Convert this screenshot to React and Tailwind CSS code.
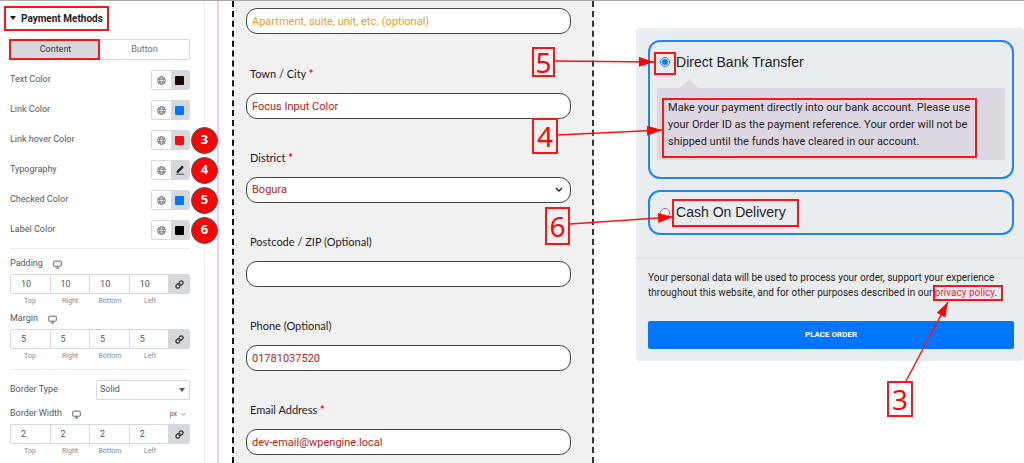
import React, { useState } from "react";

const colorControls = [
  { name: "Text Color", color: "bg-[#1c0404]" },
  { name: "Link Color", color: "bg-[#0075ff]" },
  { name: "Link hover Color", color: "bg-[#f50a0a]", badge: 3 },
  { name: "Typography", badge: 4 },
  { name: "Checked Color", color: "bg-[#0075ff]", badge: 5 },
  { name: "Label Color", color: "bg-black", badge: 6 },
];

const sides = ["Top", "Right", "Bottom", "Left"];

const callouts = [
  { label: 5, box: "left-[532px] top-[47px] w-[23px] h-[30px]" },
  { label: 4, box: "left-[532px] top-[118px] w-[26px] h-[36px]" },
  { label: 6, box: "left-[545px] top-[207px] w-[25px] h-[38px]" },
  { label: 3, box: "left-[887px] top-[381px] w-[26px] h-[36px]" },
];

const arrows = [
  { x1: 555, y1: 61, x2: 654, y2: 62 },
  { x1: 557, y1: 135, x2: 662, y2: 130 },
  { x1: 570, y1: 224, x2: 673, y2: 217 },
  { x1: 906, y1: 381, x2: 948, y2: 302 },
];

const GlobeIcon = () => (
  <svg viewBox="0 0 12 12" className="h-[9px] w-[9px]" fill="none" stroke="#515962" strokeWidth="1">
    <circle cx="6" cy="6" r="5.2" />
    <ellipse cx="6" cy="6" rx="2.4" ry="5.2" />
    <path d="M1.2 4.2h9.6M1.2 7.8h9.6" />
  </svg>
);

const PencilIcon = () => (
  <svg viewBox="0 0 12 12" className="h-[10px] w-[10px]" fill="#1f2124">
    <path d="M2 9.2V7.2L7.9 1.3a.9.9 0 0 1 1.2 0l.9.9a.9.9 0 0 1 0 1.2L4.1 9.2z" />
    <path d="M1.5 10.4h9.3v1.1H1.5z" />
  </svg>
);

const MonitorIcon = () => (
  <svg viewBox="0 0 10 10" className="h-[9px] w-[9px]" fill="none" stroke="#515962" strokeWidth="1">
    <rect x="0.8" y="1.3" width="8.4" height="5.6" rx="0.6" />
    <path d="M5 7v1.6M3 9h4" />
  </svg>
);

const LinkIcon = () => (
  <svg viewBox="0 0 24 24" className="h-[9px] w-[9px]" fill="none" stroke="#33373c" strokeWidth="3.4" strokeLinecap="round">
    <path d="M10 13a5 5 0 0 0 7.5.5l3-3a5 5 0 0 0-7-7l-1.7 1.7" />
    <path d="M14 11a5 5 0 0 0-7.5-.5l-3 3a5 5 0 0 0 7 7l1.7-1.7" />
  </svg>
);

const Highlight = ({ className }) => (
  <span aria-hidden="true" className={`pointer-events-none absolute border-2 border-[#fa1414] ${className}`} />
);

const ColorControl = ({ name, color, badge }) => (
  <div className="relative flex h-5 items-center justify-between">
    <span>{name}</span>
    <div className="flex h-5 w-[39px] overflow-hidden rounded-[2px] border border-[#d5d8dc]">
      <button aria-label={`${name} global`} className="flex flex-1 items-center justify-center">
        <GlobeIcon />
      </button>
      <button aria-label={name} className="flex flex-1 items-center justify-center bg-[#d5d8dc]">
        {color ? <span className={`h-[9px] w-[9px] rounded-[1px] ${color}`} /> : <PencilIcon />}
      </button>
    </div>
    {badge && (
      <span className="absolute left-full z-10 ml-[1px] flex h-[27px] w-[27px] items-center justify-center rounded-full border border-[#555] bg-[#fa0505] font-['Noto_Sans',sans-serif] text-[13px] font-bold text-white">
        {badge}
      </span>
    )}
  </div>
);

const Dimensions = ({ name, value, unit }) => (
  <fieldset>
    <div className="flex h-4 items-center justify-between">
      <div className="flex items-center gap-[10px]">
        <span>{name}</span>
        <MonitorIcon />
      </div>
      {unit && (
        <button className="flex items-center gap-1 pr-1 text-[7px]">
          {unit}
          <svg viewBox="0 0 6 4" className="h-[3px] w-[5px]" fill="none" stroke="#515962">
            <path d="M.5.5 3 3 5.5.5" />
          </svg>
        </button>
      )}
    </div>
    <div className="mt-[2px] grid h-5 grid-cols-[2fr_2fr_2fr_2fr_1fr] overflow-hidden rounded-[2px] border border-[#d5d8dc]">
      {sides.map((side) => (
        <input
          key={side}
          aria-label={`${name} ${side}`}
          defaultValue={value}
          className="min-w-0 border-r border-[#d5d8dc] pt-px pl-[10px] text-[9px] outline-none"
        />
      ))}
      <button aria-label={`Link ${name} values`} className="flex items-center justify-center bg-[#d5d8dc]">
        <LinkIcon />
      </button>
    </div>
    <div className="mt-[2px] grid h-[10px] grid-cols-[2fr_2fr_2fr_2fr_1fr] text-center text-[7px] leading-[10px] text-[#818a96]">
      {sides.map((side) => (
        <span key={side}>{side}</span>
      ))}
    </div>
  </fieldset>
);

const Sidebar = () => {
  const [tab, setTab] = useState("Content");

  return (
    <aside className="w-[205px] shrink-0 border-r border-[#eceef0] pr-[14px] pl-[10px] text-[9px] text-[#515962]">
      <button className="relative mt-[8px] flex h-[18px] items-center gap-[5px] text-[10px] font-bold text-[#1f2124]">
        <span className="h-0 w-0 border-x-[3px] border-t-[4px] border-x-transparent border-t-[#1f2124]" />
        Payment Methods
        <Highlight className="-top-[3px] -right-[6px] -bottom-[4px] -left-[6px]" />
      </button>

      <div className="mt-[12px] flex h-[21px] rounded-[2px] border border-[#d5d8dc]">
        {["Content", "Button"].map((name) => (
          <button
            key={name}
            onClick={() => setTab(name)}
            className={`relative flex-1 pt-px ${tab === name ? "bg-[#d5d8dc] text-[#33373c]" : "text-[#69727d]"}`}
          >
            {name}
            {name === "Content" && <Highlight className="-top-px right-0 -bottom-px -left-[2px]" />}
          </button>
        ))}
      </div>

      <div className="mt-[10px] flex flex-col gap-[10px]">
        {colorControls.map((item) => (
          <ColorControl key={item.name} {...item} />
        ))}
      </div>

      <div className="mt-[8px] flex flex-col gap-[5px] border-t border-[#e6e8ea] pt-[7px]">
        <Dimensions name="Padding" value="10" />
        <Dimensions name="Margin" value="5" />
      </div>

      <div className="mt-[8px] border-t border-[#e6e8ea] pt-[10px]">
        <div className="mb-[6px] flex h-5 items-center justify-between">
          <label htmlFor="border-type">Border Type</label>
          <div className="relative w-[94px]">
            <select id="border-type" className="block h-5 w-full appearance-none rounded-[2px] border border-[#d5d8dc] bg-white pl-[3px]">
              <option>Solid</option>
            </select>
            <span className="pointer-events-none absolute top-2 right-[5px] border-x-[3px] border-t-[4px] border-x-transparent border-t-[#515962]" />
          </div>
        </div>
        <Dimensions name="Border Width" value="2" unit="px" />
      </div>
    </aside>
  );
};

const fieldStyle =
  "block h-[26px] w-full rounded-[11px] border border-[#444] bg-white px-[5px] font-[Roboto,sans-serif] text-[11px] text-[#b81c1c] outline-none placeholder:text-[#ee9a2b]";

const Field = ({ id, label, required, children, ...rest }) => (
  <div>
    <label htmlFor={id} className="mb-[9px] ml-1 block h-5 font-[Lato,sans-serif] text-[11px] leading-5 text-[#222]">
      {label} {required && <span className="font-bold text-[#f50a0a]">*</span>}
    </label>
    {children || <input id={id} className={fieldStyle} {...rest} />}
  </div>
);

const BillingForm = () => (
  <form className="border-x-2 border-dashed border-r-[#333] border-l-[#111] bg-[#f1f1f1] pr-[21px] pb-2 pl-[12px]">
    <input
      aria-label="Apartment, suite, unit, etc. (optional)"
      placeholder="Apartment, suite, unit, etc. (optional)"
      className={`mt-[7px] ${fieldStyle}`}
    />
    <div className="mt-[30px] flex flex-col gap-[29px]">
      <Field id="city" label="Town / City" required defaultValue="Focus Input Color" />
      <Field id="district" label="District" required>
        <div className="relative">
          <select id="district" className={`appearance-none ${fieldStyle}`}>
            <option>Bogura</option>
          </select>
          <svg viewBox="0 0 8 6" className="pointer-events-none absolute top-[10px] right-[8px] h-[6px] w-[8px]" fill="none" stroke="#222" strokeWidth="1.4">
            <path d="M1 1l3 3 3-3" />
          </svg>
        </div>
      </Field>
      <Field id="postcode" label="Postcode / ZIP (Optional)" />
      <Field id="phone" label="Phone (Optional)" defaultValue="01781037520" />
      <Field id="email" label="Email Address" required defaultValue="dev-email@wpengine.local" />
    </div>
  </form>
);

const OrderPayment = () => {
  const [method, setMethod] = useState("bank");

  return (
    <section className="mt-[27px] self-start rounded-[4px] bg-[#e9edf0] text-[#222]">
      <div className="flex flex-col gap-[11px] border-b-2 border-[#e1e5e9] pt-[12px] pr-[10px] pb-[22px] pl-[12px]">
        <div className="rounded-[12px] border-2 border-[#1c84ff] px-[7px] pt-[8px] pb-[17px]">
          <label className="flex h-6 items-center gap-[6px] pl-[3px] font-['Liberation_Sans',sans-serif] text-[14px]">
            <span className="relative flex">
              <input
                type="radio"
                name="payment"
                checked={method === "bank"}
                onChange={() => setMethod("bank")}
                className="m-0 h-[10px] w-[10px] accent-[#0075ff]"
              />
              <Highlight className="-top-[5px] -right-[6px] -bottom-[8px] -left-[6px]" />
            </span>
            Direct Bank Transfer
          </label>
          <div className="mt-[5px] ml-[23px] h-0 w-0 border-x-[9px] border-b-[9px] border-x-transparent border-b-[#ddd7e2]" />
          <p className="relative rounded-[1px] bg-[#ddd7e2] pt-[11px] pr-[28px] pb-[10px] pl-[11px] text-[11px] leading-[17px] text-[#2b1d22]">
            Make your payment directly into our bank account. Please use your Order ID as the payment reference. Your
            order will not be shipped until the funds have cleared in our account.
            <Highlight className="top-[10px] right-[28px] bottom-[2px] left-[5px]" />
          </p>
        </div>
        <div className="rounded-[12px] border-2 border-[#1c84ff] px-[7px] py-[7px]">
          <label className="flex h-[27px] items-center gap-[6px] pl-[3px] font-['Liberation_Sans',sans-serif] text-[14px]">
            <input
              type="radio"
              name="payment"
              checked={method === "cod"}
              onChange={() => setMethod("cod")}
              className="m-0 h-[10px] w-[10px] accent-[#0075ff]"
            />
            <span className="relative">
              Cash On Delivery
              <Highlight className="-top-[3px] -right-[13px] -bottom-[4px] -left-[4px]" />
            </span>
          </label>
        </div>
      </div>
      <div className="pt-[11px] pr-[10px] pb-[12px] pl-[12px]">
        <p className="text-[10px] leading-[15px] text-[#2b1d22]">
          Your personal data will be used to process your order, support your experience throughout this website, and
          for other purposes described in our{" "}
          <span className="relative whitespace-nowrap">
            <a href="#privacy" className="text-[#ee2b3a]">privacy policy</a>.
            <Highlight className="-top-[2px] -right-[6px] -bottom-[3px] -left-[2px]" />
          </span>
        </p>
        <button className="mt-[21px] block h-7 w-full rounded-[2px] bg-[#0075ff] text-[8px] font-bold text-white">
          PLACE ORDER
        </button>
      </div>
    </section>
  );
};

// numbered notes and the arrows that point at the controls they explain
const Annotations = () => (
  <div className="pointer-events-none absolute inset-x-0 -top-px bottom-0 overflow-hidden">
    <svg className="absolute top-0 left-0" width="1024" height="463" viewBox="0 0 1024 463">
      <defs>
        <marker id="arrowhead" viewBox="0 0 15 10" refX="15" refY="5" markerWidth="15" markerHeight="10" markerUnits="userSpaceOnUse" orient="auto">
          <path d="M0 0l15 5-15 5z" fill="#fa0505" />
        </marker>
      </defs>
      {arrows.map((a) => (
        <line key={a.x1} {...a} stroke="#fa1414" strokeWidth="1.5" markerEnd="url(#arrowhead)" />
      ))}
    </svg>
    {callouts.map((c) => (
      <span
        key={c.label}
        className={`absolute flex items-center justify-center border-2 border-[#fa1414] font-['Noto_Sans',sans-serif] text-[28px] leading-none text-[#fa0505] ${c.box}`}
      >
        {c.label}
      </span>
    ))}
  </div>
);

const App = () => (
  <div className="relative flex min-h-screen overflow-hidden border-t border-[#a9a9a9] bg-white font-[Roboto,sans-serif]">
    <Sidebar />
    <main className="ml-[12px] grid min-w-0 flex-1 grid-cols-[minmax(0,14fr)_minmax(0,15fr)] gap-[42px] border-l-2 border-[#f3c8fb] pl-[13px]">
      <BillingForm />
      <OrderPayment />
    </main>
    <Annotations />
  </div>
);

export default App;
